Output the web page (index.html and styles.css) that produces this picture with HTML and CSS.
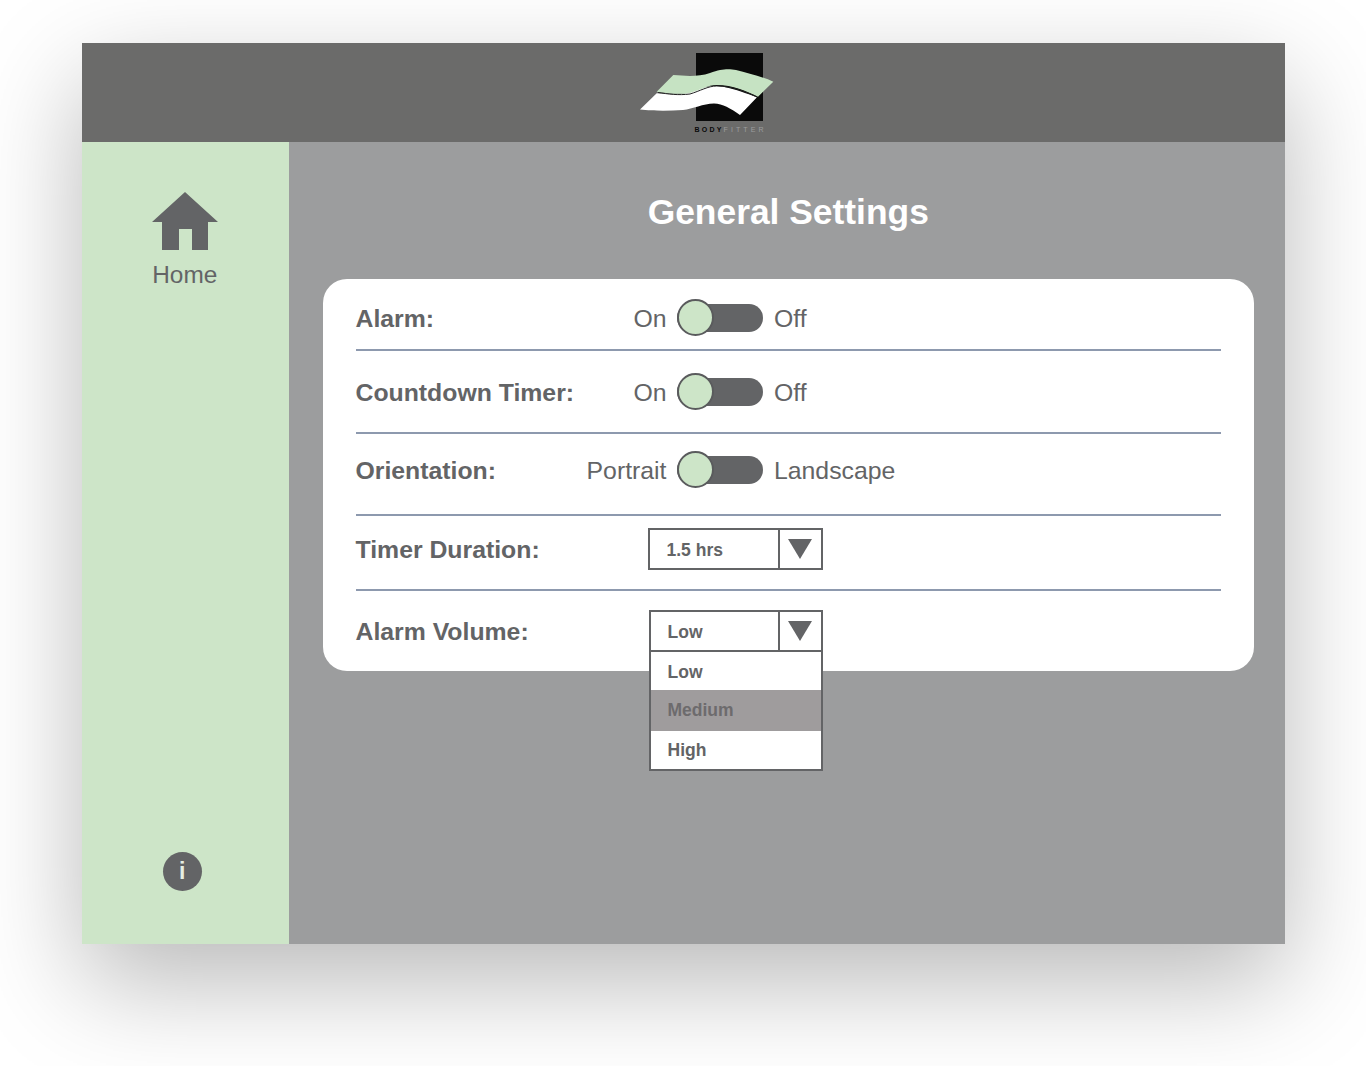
FILE: index.html
```html
<!DOCTYPE html>
<html lang="en">
<head>
<meta charset="utf-8">
<title>General Settings</title>
<link rel="stylesheet" href="styles.css">
</head>
<body>
<div class="window">
  <header class="topbar">
    <div class="logo">
      <svg class="logo-art" viewBox="0 0 138 78" aria-hidden="true">
        <rect x="58" y="0" width="67" height="68" fill="#0a0a0a"/>
        <path d="M2 56.5 L18.7 40.3 C30 41 45 43 55 38 C65 33 78 32 85 33.7 C98 36 110 41 119 44.3 L102 62 C92 55 85 51 76 50.5 C65 50.5 55 56 45 57 C30 58 15 58 2 56.5 Z" fill="#fff"/>
        <path d="M18.7 38.7 L35.3 22 C48 23 60 24 72 20 C85 15 92 16 98 17 C110 20 125 24 135.3 28.7 L120 43.7 C108 38 95 32 78.7 32 C70 32 62 37 52 40 C40 42 30 40 18.7 38.7 Z" fill="#c6e3c3"/>
        <path d="M20 39.5 C30 41 40 42.5 52 41 C62 38 70 33 78.7 33 C95 33 108 39 119 44" fill="none" stroke="#222" stroke-width="1"/>
      </svg>
      <div class="logo-word"><b>BODY</b><span>FITTER</span></div>
    </div>
  </header>
  <div class="content">
    <aside class="sidebar">
      <a class="home">
        <svg class="home-icon" viewBox="0 0 66 59" aria-hidden="true">
          <path d="M33 0 L66 30 L56 30 L56 58 L40 58 L40 37 L27 37 L27 58 L10 58 L10 30 L0 30 Z" fill="#636466"/>
        </svg>
        <span>Home</span>
      </a>
      <div class="info">i</div>
    </aside>
    <main class="main">
      <h1 class="title">General Settings</h1>
      <section class="card">
        <div class="row row-alarm">
          <span class="label">Alarm:</span>
          <span class="opt-left">On</span>
          <span class="switch"><span class="knob"></span></span>
          <span class="opt-right">Off</span>
        </div>
        <div class="row row-timer">
          <span class="label">Countdown Timer:</span>
          <span class="opt-left">On</span>
          <span class="switch"><span class="knob"></span></span>
          <span class="opt-right">Off</span>
        </div>
        <div class="row row-orient">
          <span class="label">Orientation:</span>
          <span class="opt-left">Portrait</span>
          <span class="switch"><span class="knob"></span></span>
          <span class="opt-right">Landscape</span>
        </div>
        <div class="row row-duration">
          <span class="label">Timer Duration:</span>
          <div class="select select-wide">
            <span class="select-value">1.5 hrs</span>
            <span class="select-arrow"><i class="tri"></i></span>
          </div>
        </div>
        <div class="row row-volume">
          <span class="label">Alarm Volume:</span>
          <div class="select">
            <span class="select-value">Low</span>
            <span class="select-arrow"><i class="tri"></i></span>
            <ul class="menu">
              <li>Low</li>
              <li class="active">Medium</li>
              <li>High</li>
            </ul>
          </div>
        </div>
      </section>
    </main>
  </div>
</div>
</body>
</html>
```
FILE: styles.css
```css
* { box-sizing: border-box; }
html, body { margin: 0; height: 100%; }
body {
  background: #fff;
  padding: 43px 81px 0 82px;
  font-family: "Liberation Sans", Arial, sans-serif;
  color: #636466;
  overflow: hidden;
}
.window {
  width: 1203px;
  height: 901px;
  display: flex;
  flex-direction: column;
  box-shadow: 0 38px 100px rgba(0, 0, 0, .28);
}
.topbar {
  height: 99px;
  flex: none;
  background: #6b6b6a;
  display: flex;
  justify-content: center;
  padding: 10px 0 0 46px;
}
.logo { width: 138px; display: flex; flex-direction: column; }
.logo-art { width: 138px; height: 78px; display: block; }
.logo-word {
  margin: -5px 0 0 57px;
  font-size: 7px;
  line-height: 8px;
  white-space: nowrap;
}
.logo-word b { color: #0a0a0a; letter-spacing: 2.2px; }
.logo-word span { color: #9c9d9e; letter-spacing: 3.1px; }
.content { flex: 1; display: flex; min-height: 0; }
.sidebar {
  width: 206.5px;
  flex: none;
  background: #cde5c8;
  display: flex;
  flex-direction: column;
  align-items: center;
  justify-content: space-between;
  padding: 50px 0 53px;
}
.home {
  display: flex;
  flex-direction: column;
  align-items: center;
  gap: 10px;
  font-size: 24.4px;
  line-height: 28px;
  margin-left: -1px;
}
.home-icon { width: 66px; height: 59px; display: block; }
.info {
  width: 39px;
  height: 39px;
  margin-right: 6px;
  border-radius: 50%;
  background: #636466;
  color: #e6efe3;
  font-weight: 700;
  font-size: 23px;
  line-height: 39px;
  text-align: center;
}
.main {
  flex: 1;
  background: #9c9d9e;
  padding: 47px 31px 0 34px;
}
.title {
  margin: 0 0 43px;
  color: #fff;
  font-size: 35.4px;
  line-height: 47px;
  font-weight: 700;
  text-align: center;
}
.card {
  background: #fff;
  border-radius: 24px;
  height: 392px;
  padding: 0 33px;
}
.row {
  display: grid;
  grid-template-columns: 221px 100px 86px 1fr;
  align-items: center;
  border-bottom: 2px solid #8d99ae;
  font-size: 24.8px;
}
.row-alarm { height: 72px; padding-top: 7px; }
.row-timer { height: 83px; padding-top: 1px; }
.row-orient { height: 82px; padding-bottom: 9px; }
.row-duration { height: 75px; padding-bottom: 7px; }
.row-volume { height: 80px; border-bottom: 0; }
.label { font-weight: 700; white-space: nowrap; padding-top: 2px; }
.opt-left { text-align: right; margin: 0 10px 0 -20px; padding-top: 2px; white-space: nowrap; }
.opt-right { padding: 2px 0 0 11.5px; white-space: nowrap; }
.switch {
  position: relative;
  display: block;
  width: 86px;
  height: 28px;
  background: #636466;
  border-radius: 14px;
}
.knob {
  position: absolute;
  left: 0;
  top: -5px;
  width: 37px;
  height: 37px;
  border-radius: 50%;
  background: #cde5c8;
  border: 2px solid #5a5b5d;
}
.select {
  position: relative;
  grid-column: 2 / 5;
  margin-left: 72px;
  width: 174px;
  height: 42px;
  margin-top: -1px;
  display: flex;
  background: #fff;
  border: 2px solid #636466;
  font-size: 17.5px;
  font-weight: 700;
}
.select-wide { margin-left: 71px; width: 175px; margin-top: 0; }
.select-value { flex: 1; padding-left: 17px; line-height: 41px; }
.select-arrow {
  width: 43px;
  flex: none;
  border-left: 2px solid #636466;
  display: flex;
  align-items: center;
  justify-content: center;
}
.tri {
  width: 0;
  height: 0;
  border-left: 12.5px solid transparent;
  border-right: 12.5px solid transparent;
  border-top: 20px solid #636466;
}
.menu {
  position: absolute;
  left: -2px;
  right: -2px;
  top: 38px;
  margin: 0;
  padding: 0;
  list-style: none;
  background: #fff;
  border: 2px solid #636466;
}
.menu li { height: 38px; line-height: 41px; padding-left: 17px; }
.menu li:last-child { line-height: 38px; }
.menu li.active { height: 41px; line-height: 41px; background: #9f9c9d; color: #6d6b6d; }
```
